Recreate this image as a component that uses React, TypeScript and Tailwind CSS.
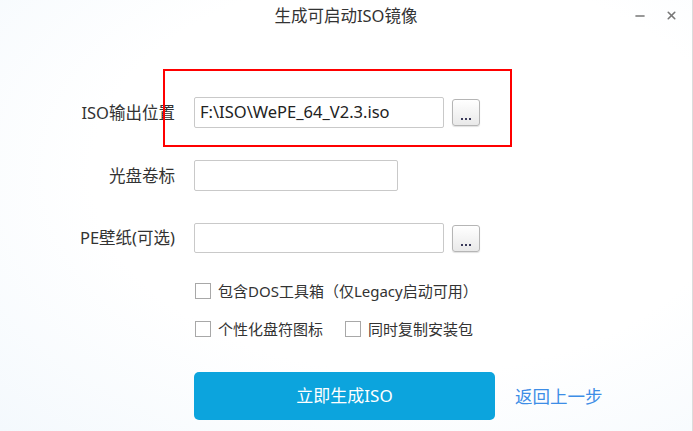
import { Minus, X } from "lucide-react";

const font = "font-['Noto_Sans','Noto_Sans_CJK_SC',sans-serif]";

function Field({ value = "", width }: { value?: string; width: string }) {
  return (
    <div
      className={`${width} h-full flex items-center pl-[5px] bg-white border border-[#c9c9c9] rounded-[2px] text-[16.5px] text-[#222]`}
    >
      {value}
    </div>
  );
}

function DotsButton() {
  return (
    <button className="ml-[8px] w-[28px] h-[27px] flex items-end justify-center pb-[5px] rounded-[3px] border border-[#b5b5b5] bg-gradient-to-b from-white to-[#e9e9e9] shadow-[0_1px_1px_rgba(0,0,0,0.12)]">
      <span className="flex gap-[2px]">
        <span className="w-[2px] h-[2px] bg-[#3a3a5a]" />
        <span className="w-[2px] h-[2px] bg-[#3a3a5a]" />
        <span className="w-[2px] h-[2px] bg-[#3a3a5a]" />
      </span>
    </button>
  );
}

function Check({ label }: { label: string }) {
  return (
    <label className="h-[20px] flex items-center gap-[7px] text-[15px] leading-[20px] text-[#333]">
      <span className="w-[16px] h-[16px] border border-[#a8a8a8] bg-white" />
      {label}
    </label>
  );
}

export default function App() {
  return (
    <div
      className={`${font} relative w-[693px] h-[431px] overflow-hidden bg-[radial-gradient(ellipse_at_60%_40%,#ffffff_55%,#f4f9fd_100%)] border-r border-[#dcdcdc]`}
    >
      {/* title bar */}
      <div className="h-[31px] grid grid-cols-[1fr_auto_1fr] items-center">
        <div />
        <div className="text-[16.5px] leading-[22px] text-[#333]">生成可启动ISO镜像</div>
        <div className="flex justify-end items-center gap-[18px] pr-[14px] text-[#777]">
          <Minus className="w-[14px] h-[14px]" strokeWidth={2.5} />
          <X className="w-[13px] h-[13px]" strokeWidth={3} />
        </div>
      </div>

      {/* form */}
      <div className="mt-[66px] grid grid-cols-[175px_auto] gap-x-[19px] gap-y-[32px] items-center">
        <div className="text-right text-[16.5px] leading-[22px] text-[#333]">ISO输出位置</div>
        <div className="h-[31px] flex items-center">
          <Field value="F:\ISO\WePE_64_V2.3.iso" width="w-[250px]" />
          <DotsButton />
        </div>

        <div className="text-right text-[16.5px] leading-[22px] text-[#333]">光盘卷标</div>
        <div className="h-[31px] flex items-center">
          <Field width="w-[204px]" />
        </div>

        <div className="text-right text-[16.5px] leading-[22px] text-[#333]">PE壁纸(可选)</div>
        <div className="h-[30px] flex items-center">
          <Field width="w-[250px]" />
          <DotsButton />
        </div>
      </div>

      <div className="ml-[195px] mt-[28px] flex flex-col gap-[18px]">
        <Check label="包含DOS工具箱（仅Legacy启动可用）" />
        <div className="flex gap-[22px]">
          <Check label="个性化盘符图标" />
          <Check label="同时复制安装包" />
        </div>
      </div>

      <div className="ml-[194px] mt-[33px] flex items-center gap-[20px]">
        <button className="w-[301px] h-[48px] rounded-[5px] bg-[#0ca4dd] text-white text-[17px]">
          立即生成ISO
        </button>
        <a className="text-[17.5px] text-[#3d8de6]">返回上一步</a>
      </div>

      {/* annotation */}
      <div className="absolute left-[163px] top-[69px] w-[349px] h-[78px] border-2 border-[#ff0000]" />
    </div>
  );
}
